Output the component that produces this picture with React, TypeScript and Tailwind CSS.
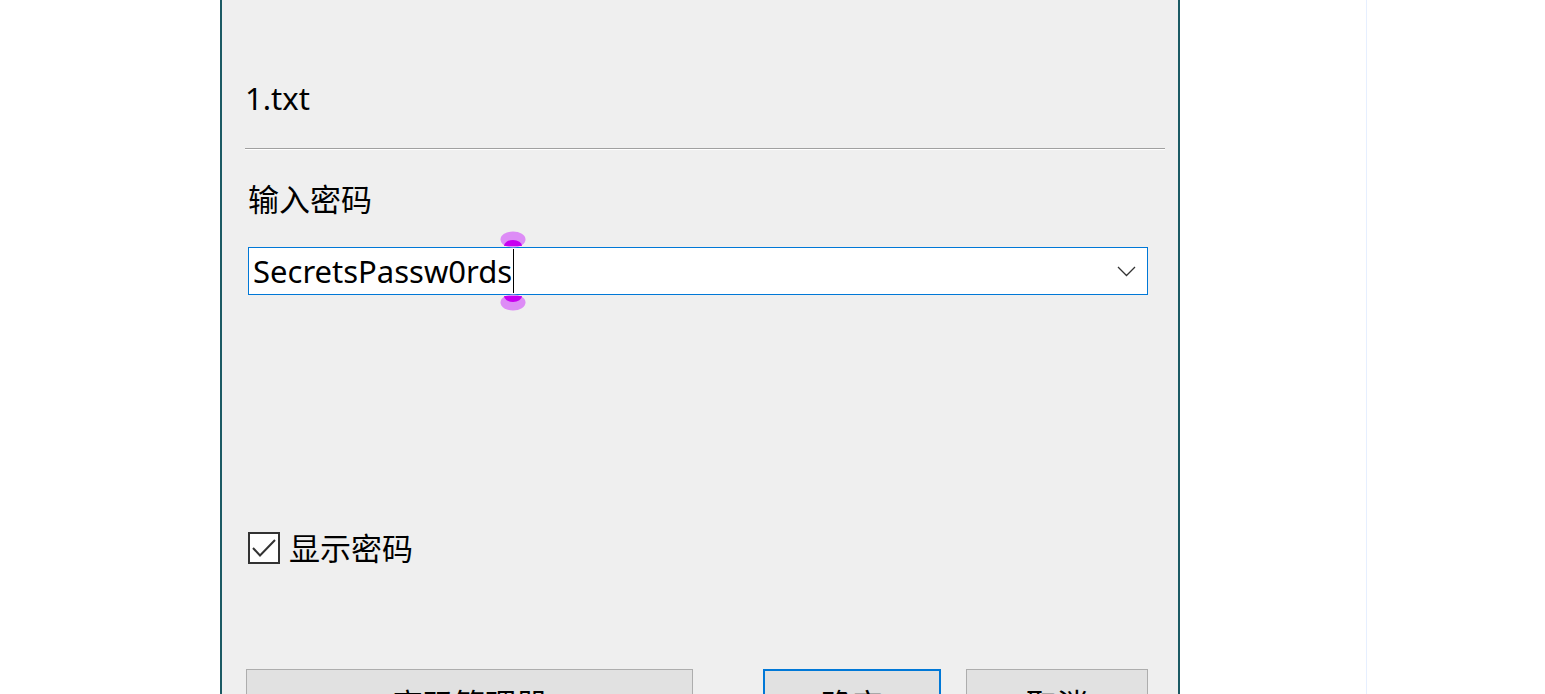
import React from "react";

const font = { fontFamily: '"Noto Sans", "Noto Sans CJK SC", sans-serif' };

function Handle({ bottom }: { bottom?: boolean }) {
  // touch selection gripper, purple blob
  return (
    <svg width="26" height="17" viewBox="0 0 26 17" className="block">
      <ellipse cx="13" cy="8.5" rx="12.5" ry="8" fill="#dd8cf6" />
      {bottom ? (
        <path d="M4 2 A9 6 0 0 0 22 2 Z" fill="#c800f0" />
      ) : (
        <path d="M4 15 A9 6 0 0 1 22 15 Z" fill="#c800f0" />
      )}
    </svg>
  );
}

export default function App() {
  return (
    <div className="flex h-[694px] w-full overflow-hidden bg-white text-black" style={font}>
      <div className="w-[220px] shrink-0" />
      <div className="w-[960px] shrink-0 border-x-2 border-[#1b5a64] bg-[#efefef]">
        <div className="pl-[23px] pt-[78px] text-[31px] leading-[40px]">1.txt</div>
        <div className="ml-[23px] mr-[13px] mt-[30px] border-t border-b border-t-[#a0a0a0] border-b-white" />
        <div className="ml-[26px] mt-[29px] text-[31px] leading-[40px]">输入密码</div>
        <div className="ml-[26px] mr-[30px] mt-[28px] flex h-[48px] items-center border border-[#0078d7] bg-white pl-[4px]">
          <span className="relative text-[31px] leading-[40px]">
            SecretsPassw0rds
            <span className="absolute right-[-2px] top-[-2px] h-[44px] w-px bg-black" />
            <span className="absolute right-[-14px] top-[-20px]">
              <Handle />
            </span>
            <span className="absolute right-[-14px] bottom-[-20px]">
              <Handle bottom />
            </span>
          </span>
          <svg width="19" height="11" viewBox="0 0 19 11" className="ml-auto mr-[11px]">
            <polyline points="1,1 9.5,9.5 18,1" fill="none" stroke="#333" strokeWidth="1.3" />
          </svg>
        </div>
        <div className="ml-[26px] mt-[233px] flex h-[40px] items-center">
          <div className="flex h-[32px] w-[32px] items-center justify-center border-2 border-[#333] bg-white">
            <svg width="26" height="22" viewBox="0 0 26 22">
              <polyline points="2,11 9,18.5 24,3" fill="none" stroke="#333" strokeWidth="2" />
            </svg>
          </div>
          <span className="ml-[9px] text-[31px] leading-[40px]">显示密码</span>
        </div>
        <div className="ml-[24px] mr-[30px] mt-[101px] flex">
          <button className="flex h-[70px] w-[448px] items-center justify-center border border-[#adadad] bg-[#e1e1e1] text-[31px] leading-[40px]">
            密码管理器
          </button>
          <button className="ml-[70px] flex h-[70px] w-[178px] items-center justify-center border-2 border-[#0078d7] bg-[#e1e1e1] text-[31px] leading-[40px]">
            确定
          </button>
          <button className="ml-[25px] flex h-[70px] w-[182px] items-center justify-center border border-[#adadad] bg-[#e1e1e1] text-[31px] leading-[40px]">
            取消
          </button>
        </div>
      </div>
      <div className="w-[186px] shrink-0" />
      <div className="w-px shrink-0 bg-[#e6efff]" />
      <div className="flex-1" />
    </div>
  );
}
